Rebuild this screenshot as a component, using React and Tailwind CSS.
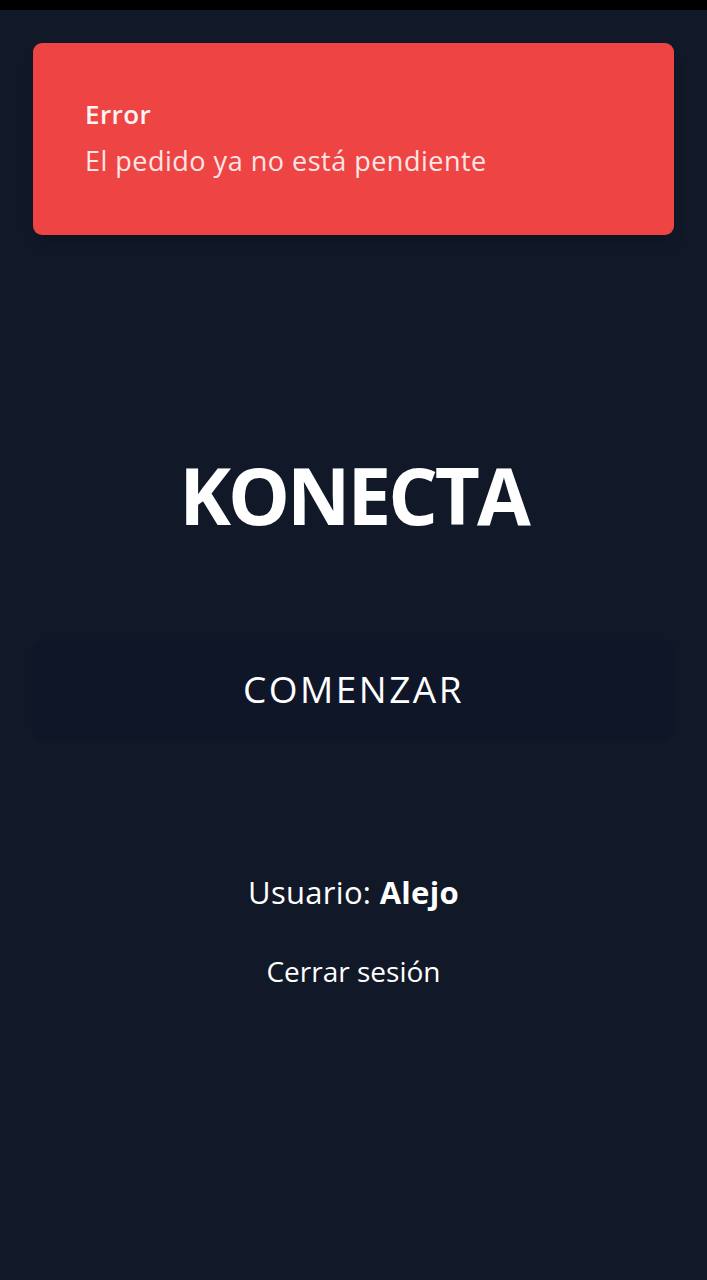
export default function App() {
  return (
    <div className="min-h-[1280px] bg-[#111827] text-white" style={{ fontFamily: '"Open Sans", "Noto Sans", sans-serif' }}>
      <div className="h-[10px] bg-black" />
      <div className="px-[33px] pt-[33px]">
        <div className="h-[192px] rounded-[9px] bg-[#ef4444] px-[52px] pt-[59px] shadow-lg">
          <p className="text-[26px] font-semibold leading-[24px] tracking-[0.4px] text-[#fff5f5]">Error</p>
          <p className="mt-[22px] text-[27px] leading-[25px] tracking-[0.5px] text-[#fde6e6]">El pedido ya no está pendiente</p>
        </div>

        <h1 className="mt-[221px] text-center text-[78px] font-bold leading-[78px] tracking-[-3px]">KONECTA</h1>

        <button className="mt-[106px] flex h-[98px] w-full items-center justify-center rounded-[12px] bg-[#0f1628] text-[37px] leading-[34px] tracking-[2.5px] text-white shadow-sm">
          COMENZAR
        </button>

        <div className="mt-[139px] flex flex-col items-center">
          <p className="text-[31px] leading-[30px] tracking-[0.3px]">
            Usuario: <span className="font-bold">Alejo</span>
          </p>
          <button className="mt-[50px] text-[28px] leading-[29px] text-white">Cerrar sesión</button>
        </div>
      </div>
    </div>
  );
}
